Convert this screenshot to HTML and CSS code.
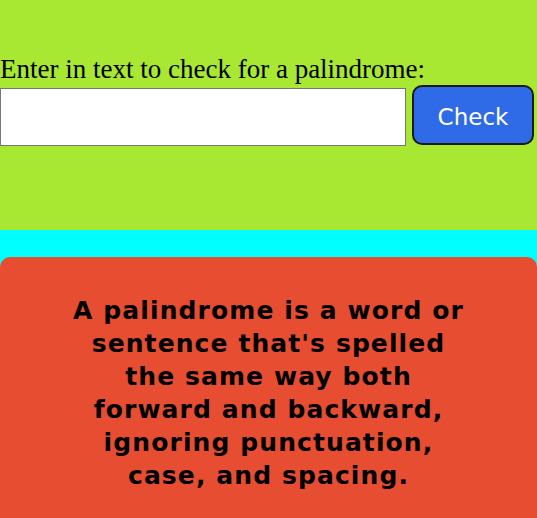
FILE: index.html
```html
<!DOCTYPE html>
<html>
<head>
<meta charset="utf-8">
<link rel="stylesheet" href="styles.css">
</head>
<body>
<section class="top">
  <label class="label" for="text-input">Enter in text to check for a palindrome:</label>
  <div class="row">
    <input id="text-input" class="text-input" type="text">
    <button class="check-btn">Check</button>
  </div>
</section>
<div class="strip"></div>
<section class="info">
  <p class="info-text">A palindrome is a word or sentence that's spelled the same way both forward and backward, ignoring punctuation, case, and spacing.</p>
</section>
</body>
</html>
```
FILE: styles.css
```css
html, body {
  margin: 0;
  padding: 0;
  background: #00ffff;
}
body {
  height: 518px;
  overflow: hidden;
}
.top {
  background: #a8e832;
  height: 230px;
  box-sizing: border-box;
  padding-top: 55px;
}
.label {
  display: block;
  font-family: "Liberation Serif", serif;
  font-size: 27px;
  line-height: 28px;
  color: #000;
}
.row {
  display: flex;
  align-items: flex-start;
  gap: 6px;
  margin-top: 2px;
}
.text-input {
  width: 406px;
  height: 58px;
  box-sizing: border-box;
  margin: 3px 0 0 0;
  border: 1px solid #767676;
  background: #fff;
  padding: 0;
}
.check-btn {
  width: 122px;
  height: 60px;
  box-sizing: border-box;
  margin: 0;
  background: #2f6be6;
  color: #fff;
  border: 2px solid #1a1a1a;
  border-radius: 10px;
  font-family: "DejaVu Sans", sans-serif;
  font-size: 23px;
  padding: 4px 0 0 0;
}
.strip {
  height: 27px;
}
.info {
  background: #e64d31;
  border-radius: 10px;
  padding: 37px 66px 40px;
  min-height: 300px;
}
.info-text {
  margin: 0;
  font-family: "DejaVu Sans", sans-serif;
  font-weight: bold;
  font-size: 25px;
  letter-spacing: 1.1px;
  line-height: 33px;
  text-align: center;
  color: #000;
}
```
